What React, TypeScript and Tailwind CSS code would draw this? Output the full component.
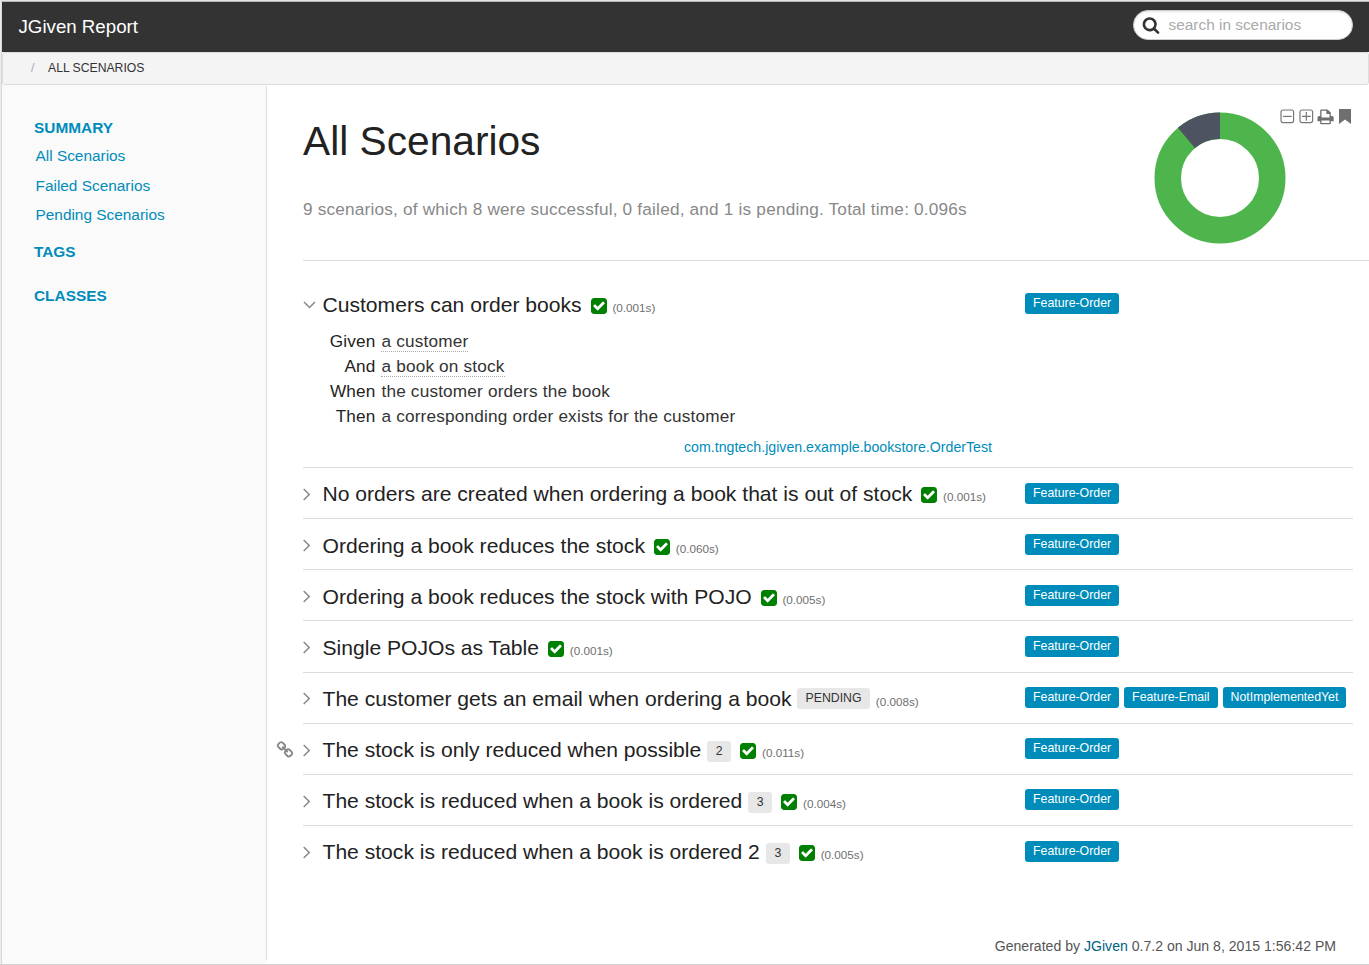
import type { ReactNode } from "react";

const CHECK =
  "M813 1299l614-614q19-19 19-45t-19-45l-102-102q-19-19-45-19t-45 19l-467 467-211-211q-19-19-45-19t-45 19l-102 102q-19 19-19 45t19 45l358 358q19 19 45 19t45-19zm851-883v960q0 119-84.5 203.5t-203.5 84.5h-960q-119 0-203.5-84.5t-84.5-203.5v-960q0-119 84.5-203.5t203.5-84.5h960q119 0 203.5 84.5t84.5 203.5z";
const SEARCH =
  "M1216 832q0-185-131.5-316.5t-316.5-131.5-316.5 131.5-131.5 316.5 131.5 316.5 316.5 131.5 316.5-131.5 131.5-316.5zm512 832q0 52-38 90t-90 38q-54 0-90-38l-343-342q-179 124-399 124-143 0-273.5-55.5t-225-150-150-225-55.5-273.5 55.5-273.5 150-225 225-150 273.5-55.5 273.5 55.5 225 150 150 225 55.5 273.5q0 220-124 399l343 343q37 37 37 90z";
const LINK =
  "M1520 1216q0-40-28-68l-208-208q-28-28-68-28-42 0-72 32 3 3 19 18.5t21.5 21.5 15 19 13 25.5 3.5 27.5q0 40-28 68t-68 28q-15 0-27.5-3.5t-25.5-13-19-15-21.5-21.5-18.5-19q-33 31-33 73 0 40 28 68l206 207q27 27 68 27 40 0 68-26l147-146q28-28 28-67zm-703-705q0-40-28-68l-206-207q-28-28-68-28-39 0-68 27l-147 146q-28 28-28 67 0 40 28 68l208 208q27 27 68 27 42 0 72-31-3-3-19-18.5t-21.5-21.5-15-19-13-25.5-3.5-27.5q0-40 28-68t68-28q15 0 27.5 3.5t25.5 13 19 15 21.5 21.5 18.5 19q33-31 33-73zm895 705q0 120-85 203l-147 146q-83 83-203 83-121 0-204-85l-206-207q-83-83-83-203 0-123 88-209l-88-88q-86 88-208 88-120 0-204-84l-208-208q-84-84-84-204t85-203l147-146q83-83 203-83 121 0 204 85l206 207q83 83 83 203 0 123-88 209l88 88q86-88 208-88 120 0 204 84l208 208q84 84 84 204z";

type Scenario = {
  title: string;
  time: string;
  tags: string[];
  cases?: string;
  pending?: boolean;
  linked?: boolean;
};

const scenarios: Scenario[] = [
  { title: "No orders are created when ordering a book that is out of stock", time: "0.001s", tags: ["Feature-Order"] },
  { title: "Ordering a book reduces the stock", time: "0.060s", tags: ["Feature-Order"] },
  { title: "Ordering a book reduces the stock with POJO", time: "0.005s", tags: ["Feature-Order"] },
  { title: "Single POJOs as Table", time: "0.001s", tags: ["Feature-Order"] },
  {
    title: "The customer gets an email when ordering a book",
    time: "0.008s",
    tags: ["Feature-Order", "Feature-Email", "NotImplementedYet"],
    pending: true,
  },
  { title: "The stock is only reduced when possible", time: "0.011s", tags: ["Feature-Order"], cases: "2", linked: true },
  { title: "The stock is reduced when a book is ordered", time: "0.004s", tags: ["Feature-Order"], cases: "3" },
  { title: "The stock is reduced when a book is ordered 2", time: "0.005s", tags: ["Feature-Order"], cases: "3" },
];

const steps = [
  { word: "Given", text: "a customer", dotted: true },
  { word: "And", text: "a book on stock", dotted: true },
  { word: "When", text: "the customer orders the book", dotted: false },
  { word: "Then", text: "a corresponding order exists for the customer", dotted: false },
];

function Tags({ tags }: { tags: string[] }) {
  return (
    <div className="flex gap-[5px] pt-[14.73px]">
      {tags.map((t) => (
        <span key={t} className="h-[21px] rounded-[3px] bg-[#008cba] px-2 text-[12.33px] leading-[20px] text-white">
          {t}
        </span>
      ))}
    </div>
  );
}

function Title({ s, open }: { s: Scenario; open?: boolean }) {
  return (
    <div className="relative flex h-[26px] items-center whitespace-nowrap">
      {s.linked && (
        <svg className="absolute top-[3.5px] -left-[27px] size-[18px]" viewBox="0 0 1792 1792" fill="#888">
          <path d={LINK} />
        </svg>
      )}
      <span className="w-[19.5px] shrink-0">
        {open ? (
          <svg width="13" height="13" viewBox="0 0 13 13" fill="none" stroke="#888" strokeWidth="1.5">
            <path d="M1 4l5.5 5.5L12 4" />
          </svg>
        ) : (
          <svg width="8" height="13" viewBox="0 0 8 13" fill="none" stroke="#888" strokeWidth="1.5">
            <path d="M.7 1l5.5 5.5L.7 12" />
          </svg>
        )}
      </span>
      <span className="text-[21.1px] leading-[26px] text-[#222]">{s.title}</span>
      {s.pending && (
        <span className="-mt-px ml-[5.5px] h-[21px] w-[73px] rounded-[3px] bg-[#e7e7e7] text-center text-[12.3px] leading-[20px] text-[#333]">
          PENDING
        </span>
      )}
      {s.cases && (
        <span className="mt-[2px] ml-[6px] h-[21px] w-6 rounded-[3px] bg-[#e7e7e7] text-center text-[12.3px] leading-[20px] text-[#333]">
          {s.cases}
        </span>
      )}
      {!s.pending && (
        <svg className="mt-[2px] ml-[9px] size-[16px]" viewBox="128 128 1536 1536" fill="green">
          <path d={CHECK} />
        </svg>
      )}
      <span className="mt-[6px] ml-[5.8px] text-[11.7px] leading-[14px] text-[#6f6f6f]">({s.time})</span>
    </div>
  );
}

function Row({ s, open, last, children }: { s: Scenario; open?: boolean; last?: boolean; children?: ReactNode }) {
  return (
    <div
      className={
        (open ? "h-[189.9px] " : "h-[51.14px] ") + "flex w-[1050px] " + (last ? "" : "border-b border-[#dddddd]")
      }
    >
      <div className="w-[722px] shrink-0 pt-[13.4px]">
        <Title s={s} open={open} />
        {children}
      </div>
      <Tags tags={s.tags} />
    </div>
  );
}

export default function App() {
  return (
    <div className="flex h-[965px] w-[1369px] flex-col overflow-hidden border-t border-b border-t-[#e4e4e4] border-b-[#d4d4d4] bg-white font-['Liberation_Sans',sans-serif]">
      <div className="flex min-h-0 flex-1 border-l border-[#ececec]">
        <div className="flex min-w-0 flex-1 flex-col border-t border-l border-t-[#b4b7b7] border-l-[#d8d8d8]">
          <header className="flex h-[50px] shrink-0 justify-between bg-[#333333] pr-4 pl-[16.5px]">
            <h1 className="text-[18.7px] leading-[49px] text-white">JGiven Report</h1>
            <div className="mt-2 flex h-[30px] w-[220px] items-center rounded-full border border-[#ccc] bg-white pl-[8px] shadow-[inset_0_1px_2px_rgba(0,0,0,0.1)]">
              <svg className="size-[18px]" viewBox="0 0 1792 1792" fill="#333">
                <path d={SEARCH} />
              </svg>
              <span className="ml-[8.5px] text-[15.4px] leading-[28px] text-[#aaaaaa]">search in scenarios</span>
            </div>
          </header>
          <nav className="flex h-[33px] shrink-0 rounded-[3px] border border-[#dcdcdc] bg-[#f4f4f4] pl-7 text-[12.2px] leading-[30px] text-[#333]">
            <span className="w-[17px] text-[#aaaaaa]">/</span>
            <span>ALL SCENARIOS</span>
          </nav>
          <div className="flex min-h-0 flex-1">
            <aside className="flex w-[265px] shrink-0 flex-col bg-[#fafafa] pt-px">
              <div className="h-[874px] border-r border-[#dddddd] pt-[32px] pl-8 text-[15.4px] leading-[20px] text-[#008cba]">
                <h2 className="font-bold">SUMMARY</h2>
                <ul className="pt-[3px] pl-[1.5px] leading-[29.5px]">
                  <li>All Scenarios</li>
                  <li>Failed Scenarios</li>
                  <li>Pending Scenarios</li>
                </ul>
                <h2 className="mt-[12px] font-bold">TAGS</h2>
                <h2 className="mt-[24px] font-bold">CLASSES</h2>
              </div>
            </aside>
            <main className="relative flex min-w-0 flex-1 flex-col pl-9">
              <div className="flex h-[176px] shrink-0 justify-between border-b border-[#dddddd]">
                <div>
                  <h1 className="mt-[29px] text-[40.7px] leading-[54px] text-[#222]">All Scenarios</h1>
                  <p className="mt-[31px] text-[17.2px] leading-[20px] tracking-[0.2px] text-[#888]">
                    9 scenarios, of which 8 were successful, 0 failed, and 1 is pending. Total time: 0.096s
                  </p>
                </div>
                <div className="flex pr-[18px]">
                  <svg className="mt-[27px] size-[132px]" viewBox="-66 -66 132 132">
                    <circle r="52.25" fill="none" stroke="#4db54c" strokeWidth="26.5" />
                    <path d="M0 -65.5A65.5 65.5 0 0 0 -42.1 -50.18L-25.1 -29.9A39 39 0 0 1 0 -39Z" fill="#4d5361" />
                  </svg>
                  <div className="-ml-[6px] flex items-start pt-[23.5px]">
                    <svg width="15" height="15" viewBox="0 0 15 15" fill="none" stroke="#777" strokeWidth="1.2">
                      <rect x="1" y="1" width="12.6" height="12.6" rx="2" />
                      <path d="M3 7.4h8.7" />
                    </svg>
                    <svg className="ml-[3.5px]" width="15" height="15" viewBox="0 0 15 15" fill="none" stroke="#777" strokeWidth="1.2">
                      <rect x="1" y="1" width="12.6" height="12.6" rx="2" />
                      <path d="M3 7.4h8.7M7.3 3v8.7" />
                    </svg>
                    <svg className="ml-[3.5px]" width="17" height="16" viewBox="0 0 17 16" fill="#6f6f6f">
                      <path
                        fillRule="evenodd"
                        d="M3.2 7V1.4Q3.2 .4 4.2 .4H10.5L13.8 3.6V7H15Q16.7 7 16.7 8.7V12.3H13.8V14.2Q13.8 15.2 12.8 15.2H4.2Q3.2 15.2 3.2 14.2V12.3H.5V8.7Q.5 7 2 7ZM4.5 8.5H12.5V4.9H9.4V1.7H4.5ZM4.5 11.6V14H12.5V11.6Z"
                      />
                    </svg>
                    <svg className="mt-[.5px] ml-[5px]" width="12" height="15" viewBox="0 0 12 15" fill="#6f6f6f">
                      <path d="M0 0H12V15L6 10.5L0 15Z" />
                    </svg>
                  </div>
                </div>
              </div>
              <div className="pt-[17.14px]">
                <Row s={{ title: "Customers can order books", time: "0.001s", tags: ["Feature-Order"] }} open>
                  <div className="mt-[11.4px] text-[17.2px] leading-[25px] tracking-[0.18px] text-[#333]">
                    {steps.map((st) => (
                      <div key={st.word} className="flex h-[25px]">
                        <span className="w-[72.6px] text-right text-[#222]">{st.word}</span>
                        <span className={"ml-[5.9px] h-[23px] " + (st.dotted ? "border-b border-dotted border-[#aaaaaa]" : "")}>
                          {st.text}
                        </span>
                      </div>
                    ))}
                  </div>
                  <div className="mt-[8px] w-[689px] text-right text-[14.18px] leading-[20px] text-[#008cba]">
                    com.tngtech.jgiven.example.bookstore.OrderTest
                  </div>
                </Row>
                {scenarios.map((s, i) => (
                  <Row key={s.title} s={s} last={i === scenarios.length - 1} />
                ))}
              </div>
              <footer className="mt-auto mb-[8px] pr-[33px] text-right text-[14.08px] leading-[20px] text-[#555]">
                Generated by <span className="text-[#00617f]">JGiven</span> 0.7.2 on Jun 8, 2015 1:56:42 PM
              </footer>
            </main>
          </div>
        </div>
      </div>
    </div>
  );
}
